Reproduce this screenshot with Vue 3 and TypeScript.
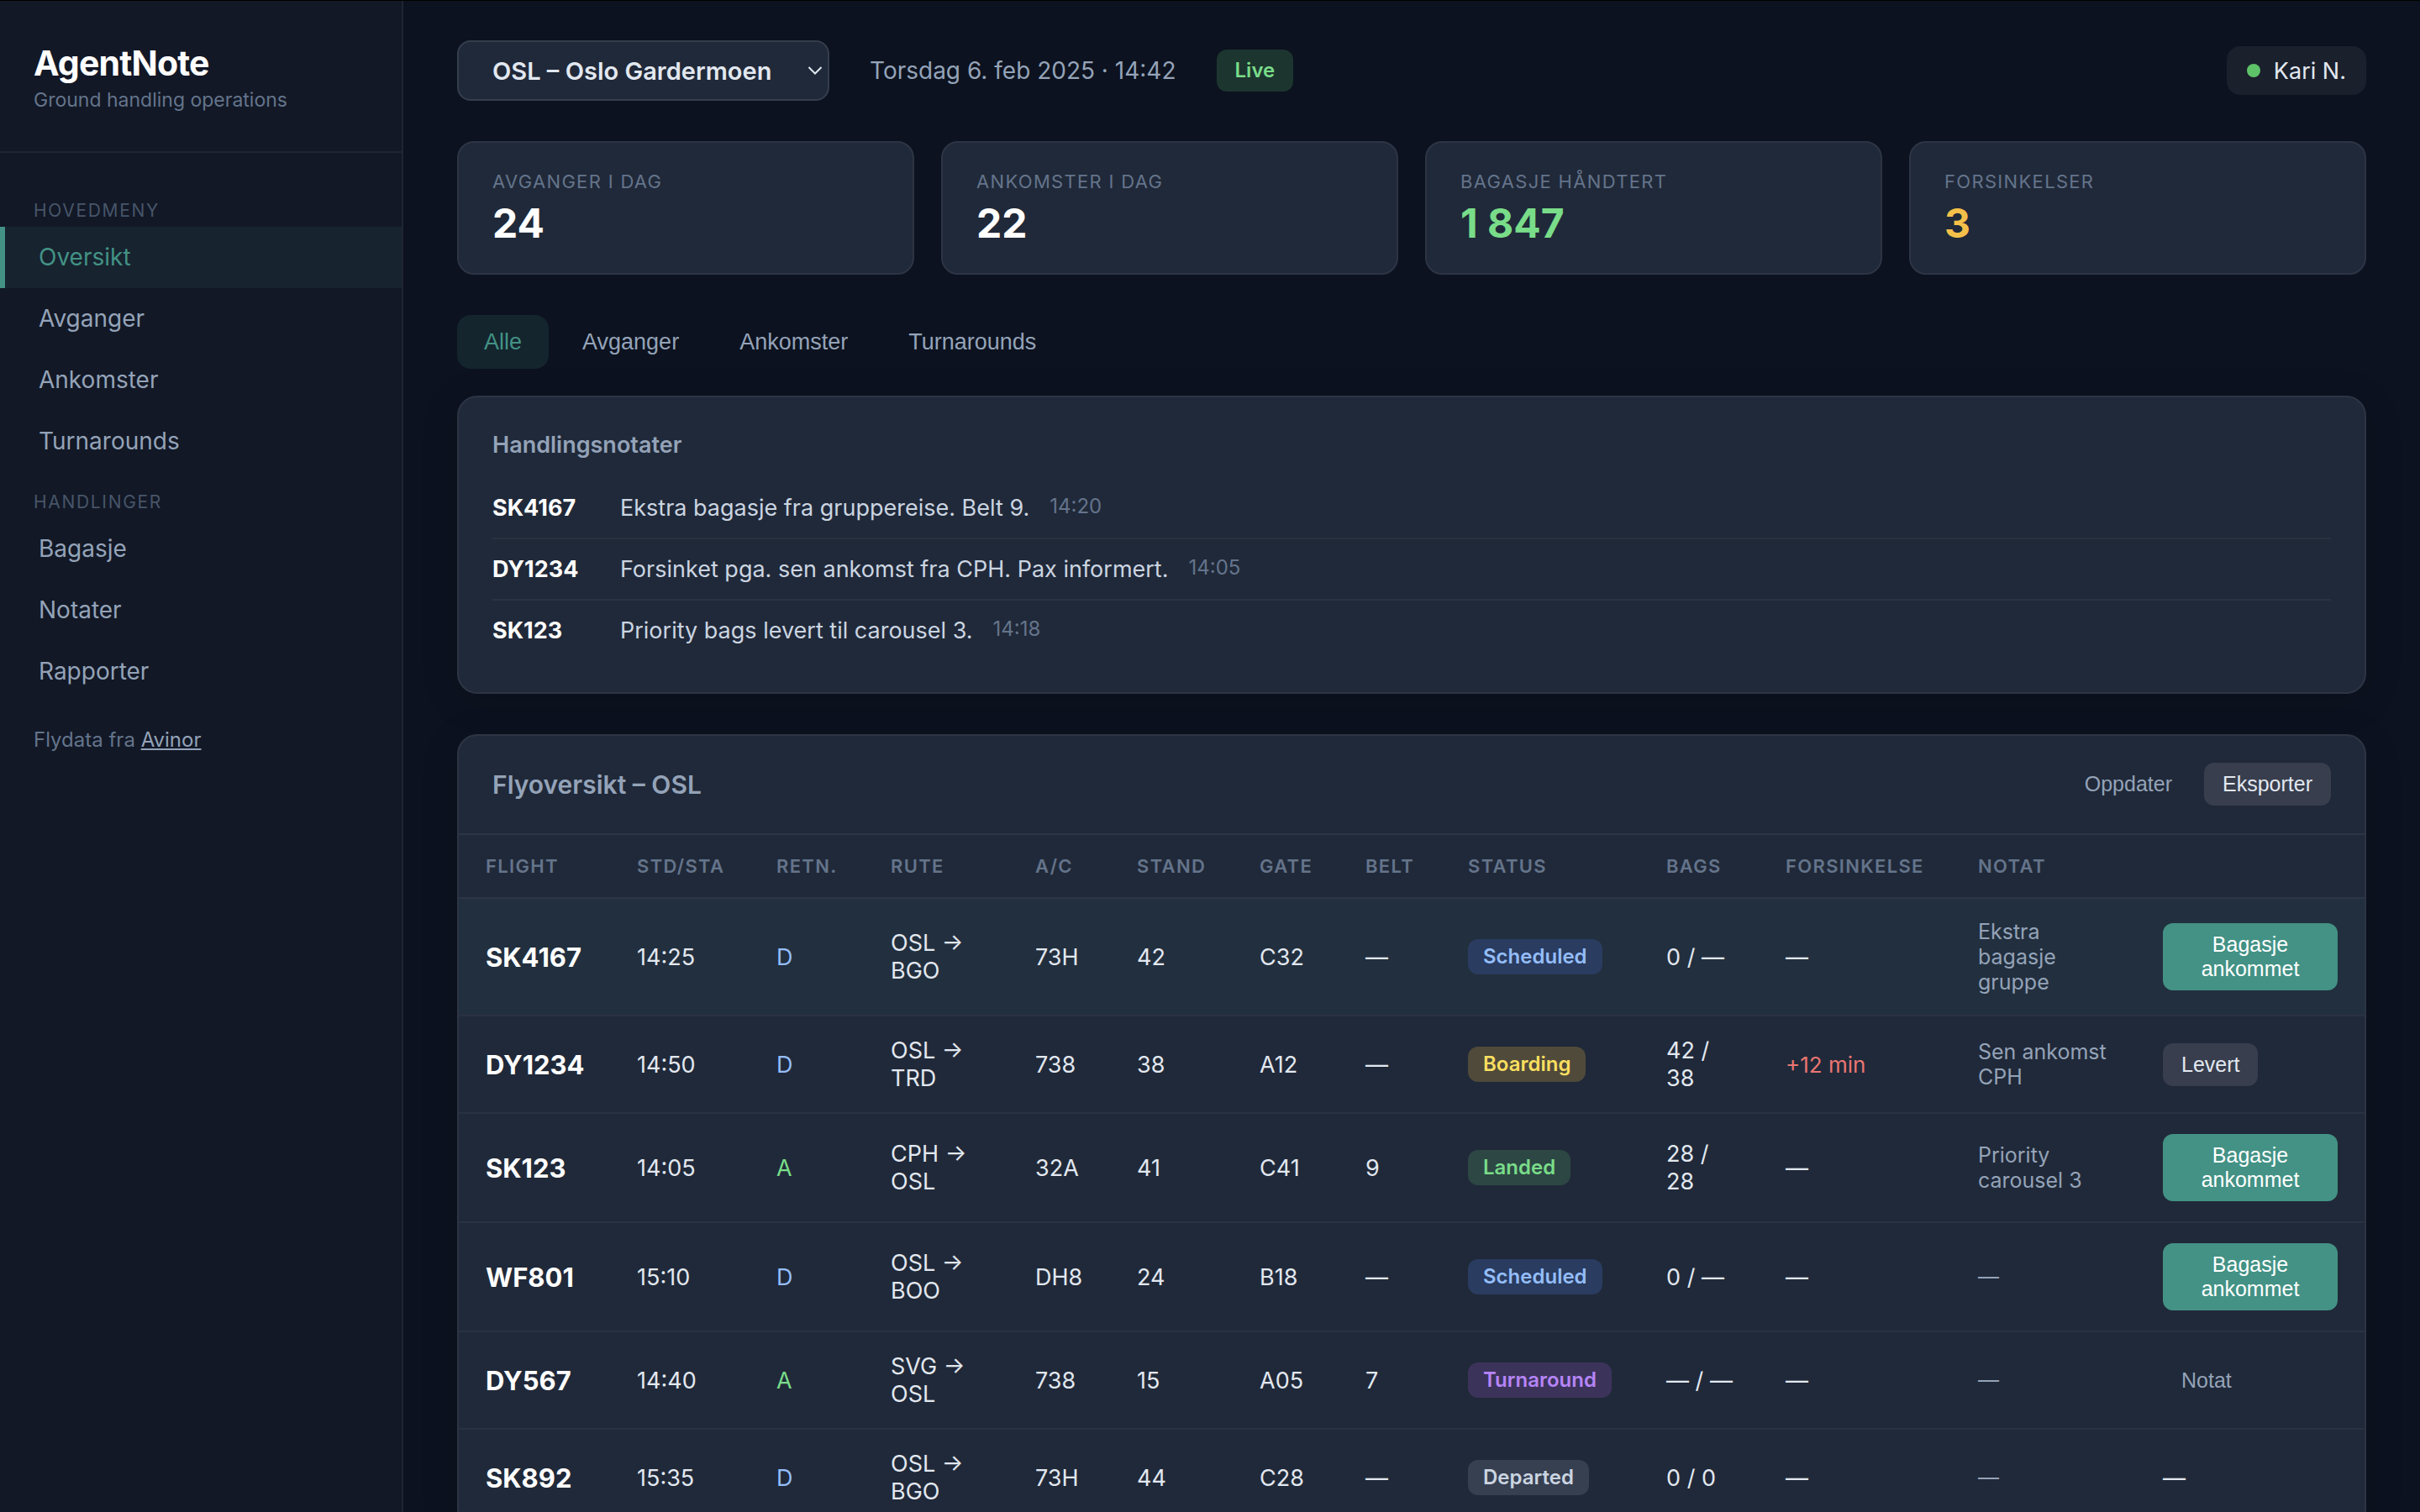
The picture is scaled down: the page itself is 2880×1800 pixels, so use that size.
<script setup lang="ts">
import { ref } from 'vue'

interface Flight {
  id: string
  time: string
  dir: 'D' | 'A'
  route: string
  aircraft: string
  stand: string
  gate: string
  belt: string
  status: string
  bags: string
  delay: string
  note: string
  action: { label: string; kind: 'primary' | 'secondary' | 'ghost' } | null
}

const airports = ['OSL – Oslo Gardermoen', 'BGO – Bergen Flesland', 'TRD – Trondheim Værnes']
const airport = ref(airports[0])

const mainMenu = ['Oversikt', 'Avganger', 'Ankomster', 'Turnarounds']
const actionMenu = ['Bagasje', 'Notater', 'Rapporter']
const activePage = ref('Oversikt')

const stats = [
  { label: 'Avganger i dag', value: '24', tone: '' },
  { label: 'Ankomster i dag', value: '22', tone: '' },
  { label: 'Bagasje håndtert', value: '1 847', tone: 'good' },
  { label: 'Forsinkelser', value: '3', tone: 'warn' },
]

const tabs = ['Alle', 'Avganger', 'Ankomster', 'Turnarounds']
const activeTab = ref('Alle')

const notes = [
  { flight: 'SK4167', text: 'Ekstra bagasje fra gruppereise. Belt 9.', time: '14:20' },
  { flight: 'DY1234', text: 'Forsinket pga. sen ankomst fra CPH. Pax informert.', time: '14:05' },
  { flight: 'SK123', text: 'Priority bags levert til carousel 3.', time: '14:18' },
]

const columns = [
  { key: 'flight', label: 'Flight' },
  { key: 'time', label: 'STD/STA' },
  { key: 'dir', label: 'Retn.' },
  { key: 'route', label: 'Rute' },
  { key: 'aircraft', label: 'A/C' },
  { key: 'stand', label: 'Stand' },
  { key: 'gate', label: 'Gate' },
  { key: 'belt', label: 'Belt' },
  { key: 'status', label: 'Status' },
  { key: 'bags', label: 'Bags' },
  { key: 'delay', label: 'Forsinkelse' },
  { key: 'note', label: 'Notat' },
  { key: 'action', label: '' },
]

const arrived = { label: 'Bagasje ankommet', kind: 'primary' } as const

const flights: Flight[] = [
  { id: 'SK4167', time: '14:25', dir: 'D', route: 'OSL → BGO', aircraft: '73H', stand: '42', gate: 'C32', belt: '—', status: 'Scheduled', bags: '0 / —', delay: '—', note: 'Ekstra bagasje gruppe', action: arrived },
  { id: 'DY1234', time: '14:50', dir: 'D', route: 'OSL → TRD', aircraft: '738', stand: '38', gate: 'A12', belt: '—', status: 'Boarding', bags: '42 / 38', delay: '+12 min', note: 'Sen ankomst CPH', action: { label: 'Levert', kind: 'secondary' } },
  { id: 'SK123', time: '14:05', dir: 'A', route: 'CPH → OSL', aircraft: '32A', stand: '41', gate: 'C41', belt: '9', status: 'Landed', bags: '28 / 28', delay: '—', note: 'Priority carousel 3', action: arrived },
  { id: 'WF801', time: '15:10', dir: 'D', route: 'OSL → BOO', aircraft: 'DH8', stand: '24', gate: 'B18', belt: '—', status: 'Scheduled', bags: '0 / —', delay: '—', note: '—', action: arrived },
  { id: 'DY567', time: '14:40', dir: 'A', route: 'SVG → OSL', aircraft: '738', stand: '15', gate: 'A05', belt: '7', status: 'Turnaround', bags: '— / —', delay: '—', note: '—', action: { label: 'Notat', kind: 'ghost' } },
  { id: 'SK892', time: '15:35', dir: 'D', route: 'OSL → BGO', aircraft: '73H', stand: '44', gate: 'C28', belt: '—', status: 'Departed', bags: '0 / 0', delay: '—', note: '—', action: null },
]

const selected = ref('SK4167')
</script>

<template>
  <div class="app">
    <aside class="sidebar">
      <div class="brand">
        <h1>AgentNote</h1>
        <p>Ground handling operations</p>
      </div>
      <nav class="menu">
        <h2>Hovedmeny</h2>
        <a
          v-for="item in mainMenu"
          :key="item"
          href="#"
          :class="{ active: item === activePage }"
          @click.prevent="activePage = item"
        >{{ item }}</a>
        <h2 class="second">Handlinger</h2>
        <a
          v-for="item in actionMenu"
          :key="item"
          href="#"
          :class="{ active: item === activePage }"
          @click.prevent="activePage = item"
        >{{ item }}</a>
      </nav>
      <p class="source">Flydata fra <a href="#">Avinor</a></p>
    </aside>

    <main class="main">
      <header class="topbar">
        <div class="picker">
          <select v-model="airport" aria-label="Flyplass">
            <option v-for="a in airports" :key="a">{{ a }}</option>
          </select>
          <svg class="chevron" viewBox="0 0 18 12" aria-hidden="true">
            <path d="M1.5 2 L9 9.5 L16.5 2" />
          </svg>
        </div>
        <span class="date">Torsdag 6. feb 2025 · 14:42</span>
        <span class="live">Live</span>
        <div class="user"><span class="dot"></span>Kari N.</div>
      </header>

      <section class="stats">
        <div v-for="s in stats" :key="s.label" class="stat">
          <div class="stat-label">{{ s.label }}</div>
          <div class="stat-value" :class="s.tone">{{ s.value }}</div>
        </div>
      </section>

      <div class="tabs">
        <button
          v-for="t in tabs"
          :key="t"
          type="button"
          :class="{ active: t === activeTab }"
          @click="activeTab = t"
        >{{ t }}</button>
      </div>

      <section class="panel notes">
        <h3>Handlingsnotater</h3>
        <ul>
          <li v-for="n in notes" :key="n.flight">
            <strong>{{ n.flight }}</strong>
            <span class="note-text">{{ n.text }}</span>
            <time>{{ n.time }}</time>
          </li>
        </ul>
      </section>

      <section class="panel board">
        <div class="board-head">
          <h3>Flyoversikt – OSL</h3>
          <div class="board-actions">
            <button type="button" class="btn ghost">Oppdater</button>
            <button type="button" class="btn secondary">Eksporter</button>
          </div>
        </div>
        <table>
          <colgroup>
            <col v-for="c in columns" :key="c.key" :class="'col-' + c.key" />
          </colgroup>
          <thead>
            <tr>
              <th v-for="c in columns" :key="c.key" scope="col">{{ c.label }}</th>
            </tr>
          </thead>
          <tbody>
            <tr v-for="f in flights" :key="f.id" :class="{ selected: f.id === selected }" @click="selected = f.id">
              <td class="flight">{{ f.id }}</td>
              <td>{{ f.time }}</td>
              <td :class="f.dir === 'D' ? 'dep' : 'arr'">{{ f.dir }}</td>
              <td>{{ f.route }}</td>
              <td>{{ f.aircraft }}</td>
              <td>{{ f.stand }}</td>
              <td>{{ f.gate }}</td>
              <td>{{ f.belt }}</td>
              <td><span class="badge" :class="f.status.toLowerCase()">{{ f.status }}</span></td>
              <td class="bags">{{ f.bags }}</td>
              <td><span :class="{ late: f.delay !== '—' }">{{ f.delay }}</span></td>
              <td class="note">{{ f.note }}</td>
              <td>
                <button v-if="f.action" type="button" class="btn" :class="f.action.kind">{{ f.action.label }}</button>
                <template v-else>—</template>
              </td>
            </tr>
          </tbody>
        </table>
      </section>
    </main>
  </div>
</template>

<style>
body {
  margin: 0;
  background: #0c121f;
}
</style>

<style scoped>
* {
  box-sizing: border-box;
}

.app {
  display: flex;
  height: 100vh;
  border-top: 1px solid #000;
  background: #0c121f;
  color: #e2e8f0;
  font-family: Inter, 'Liberation Sans', sans-serif;
  font-size: 27px;
  line-height: 33px;
}

h1, h2, h3, p, ul {
  margin: 0;
  padding: 0;
  font-weight: 400;
}

/* Sidebar */
.sidebar {
  flex: 0 0 480px;
  border-right: 2px solid #1f2532;
  background: #121826;
}

.brand {
  padding: 48px 40px 46px;
  border-bottom: 2px solid #1f2532;
}

.brand h1 {
  margin-bottom: 4px;
  color: #fff;
  font-size: 41px;
  line-height: 52px;
  font-weight: 700;
  letter-spacing: -0.02em;
}

.brand p {
  color: #64748b;
  font-size: 23px;
  line-height: 29px;
}

.menu {
  padding-top: 56px;
}

.menu h2 {
  padding: 0 40px 7px;
  color: #475569;
  font-size: 21px;
  line-height: 25px;
  letter-spacing: 0.08em;
  text-transform: uppercase;
}

.menu h2.second {
  padding-top: 23px;
}

.menu a {
  display: block;
  padding: 19px 40px;
  border-left: 6px solid transparent;
  color: #94a3b8;
  font-size: 28px;
  line-height: 35px;
  text-decoration: none;
}

.menu a.active {
  border-left-color: #439285;
  background: #17232f;
  color: #439285;
}

.source {
  padding: 30px 40px;
  color: #64748b;
  font-size: 24px;
  line-height: 29px;
}

.source a {
  color: #94a3b8;
}

/* Main column */
.main {
  flex: 1;
  min-width: 0;
  padding: 47px 64px;
  overflow-y: auto;
  scrollbar-width: none;
}

.topbar {
  display: flex;
  align-items: center;
  gap: 48px;
  margin-bottom: 48px;
}

.picker {
  position: relative;
}

.picker select {
  display: block;
  width: 443px;
  height: 72px;
  padding: 0 40px;
  border: 2px solid #353e4d;
  border-radius: 16px;
  background: #202939;
  color: #e2e8f0;
  font: 600 29px Inter, 'Liberation Sans', sans-serif;
  appearance: none;
}

.chevron {
  position: absolute;
  right: 8px;
  top: 30px;
  width: 18px;
  height: 12px;
  fill: none;
  stroke: #e2e8f0;
  stroke-width: 2;
  pointer-events: none;
}

.date {
  color: #94a3b8;
  font-size: 28px;
  line-height: 34px;
}

.live {
  padding: 10px 22px;
  border-radius: 12px;
  background: #1d352f;
  color: #79dc89;
  font-size: 24px;
  line-height: 30px;
  font-weight: 600;
}

.user {
  display: flex;
  align-items: center;
  gap: 16px;
  height: 58px;
  margin-left: auto;
  padding: 0 24px;
  border-radius: 16px;
  background: #1a202c;
}

.dot {
  width: 16px;
  height: 16px;
  border-radius: 50%;
  background: #5ec269;
}

.stats {
  display: grid;
  grid-template-columns: repeat(4, 1fr);
  gap: 32px;
  margin-bottom: 48px;
}

.stat {
  padding: 33px 40px 30px;
  border: 2px solid #2d3545;
  border-radius: 20px;
  background: #202939;
}

.stat-label {
  margin-bottom: 7px;
  color: #64748b;
  font-size: 22px;
  line-height: 27px;
  letter-spacing: 0.06em;
  text-transform: uppercase;
}

.stat-value {
  color: #fff;
  font-size: 48px;
  line-height: 58px;
  font-weight: 700;
}

.stat-value.good {
  color: #79dc89;
}

.stat-value.warn {
  color: #f5c04a;
}

.tabs {
  display: flex;
  gap: 8px;
  margin-bottom: 32px;
}

.tabs button {
  height: 64px;
  padding: 0 32px;
  border: 0;
  border-radius: 16px;
  background: transparent;
  color: #94a3b8;
  font: 27px 'Liberation Sans', Arial, sans-serif;
}

.tabs button.active {
  background: #14252e;
  color: #439285;
}

.panel {
  border: 2px solid #2d3545;
  border-radius: 24px;
  background: #202939;
  box-shadow: 0 8px 48px rgba(0, 0, 0, 0.12);
}

.panel h3 {
  color: #94a3b8;
  font-size: 27px;
  font-weight: 600;
}

.notes {
  margin-bottom: 48px;
  padding: 40px 40px 38px;
}

.notes h3 {
  margin-bottom: 23px;
}

.notes ul {
  list-style: none;
}

.notes li {
  display: flex;
  align-items: flex-start;
  gap: 24px;
  padding: 19px 0;
  border-bottom: 2px solid #2a3242;
}

.notes li:last-child {
  border-bottom: 0;
}

.notes strong {
  flex: 0 0 128px;
  color: #fff;
  font-weight: 700;
}

.note-text {
  color: #cbd5e1;
}

.notes time {
  color: #64748b;
  font-size: 24px;
  line-height: 29px;
}

/* Flight board */
.board {
  overflow: hidden;
}

.board-head {
  display: flex;
  align-items: center;
  justify-content: space-between;
  padding: 32px 40px 33px;
  border-bottom: 2px solid #2d3545;
}

.board-head h3 {
  font-size: 30px;
  line-height: 36px;
}

.board-actions {
  display: flex;
  gap: 16px;
}

.btn {
  padding: 11px 22px;
  border: 0;
  border-radius: 12px;
  font: 25px/29px 'Liberation Sans', Arial, sans-serif;
}

.btn.primary {
  background: #439285;
  color: #fff;
}

.btn.secondary {
  background: #383e4d;
  color: #e2e8f0;
}

.btn.ghost {
  background: transparent;
  color: #94a3b8;
}

table {
  width: 100%;
  table-layout: fixed;
  border-collapse: separate;
  border-spacing: 0;
}

.col-flight { width: 180px; }
.col-time { width: 166px; }
.col-dir { width: 136px; }
.col-route { width: 172px; }
.col-aircraft { width: 121px; }
.col-stand { width: 146px; }
.col-gate { width: 126px; }
.col-belt { width: 122px; }
.col-status { width: 236px; }
.col-bags { width: 142px; }
.col-delay { width: 229px; }
.col-note { width: 220px; }
.col-action { width: 272px; }

th {
  padding: 24px 0 24px 32px;
  border-bottom: 2px solid #2d3545;
  color: #64748b;
  font-size: 22px;
  line-height: 26px;
  font-weight: 600;
  letter-spacing: 0.06em;
  text-align: left;
  text-transform: uppercase;
}

td {
  padding: 24px 32px;
  border-bottom: 2px solid #2a3242;
  vertical-align: middle;
}

tr.selected td {
  background: #222f3e;
}

td.flight {
  padding-right: 0;
  color: #fff;
  font-size: 31px;
  font-weight: 700;
}

td.bags {
  padding-right: 24px;
}

td.dep {
  color: #94bdf9;
}

td.arr {
  color: #79dc89;
}

td.note {
  color: #94a3b8;
  font-size: 25px;
  line-height: 30px;
}

.late {
  color: #ea7672;
  font-size: 26px;
}

.badge {
  display: inline-block;
  padding: 6px 18px;
  border-radius: 12px;
  font-size: 24px;
  line-height: 30px;
  font-weight: 600;
}

.badge.scheduled {
  background: #2a3c60;
  color: #94bdf9;
}

.badge.boarding {
  background: #504a3b;
  color: #f9df5f;
}

.badge.landed {
  background: #2d4744;
  color: #79dc89;
}

.badge.turnaround {
  background: #3c335b;
  color: #b685f7;
}

.badge.departed {
  background: #374051;
  color: #cbd5e1;
}
</style>
